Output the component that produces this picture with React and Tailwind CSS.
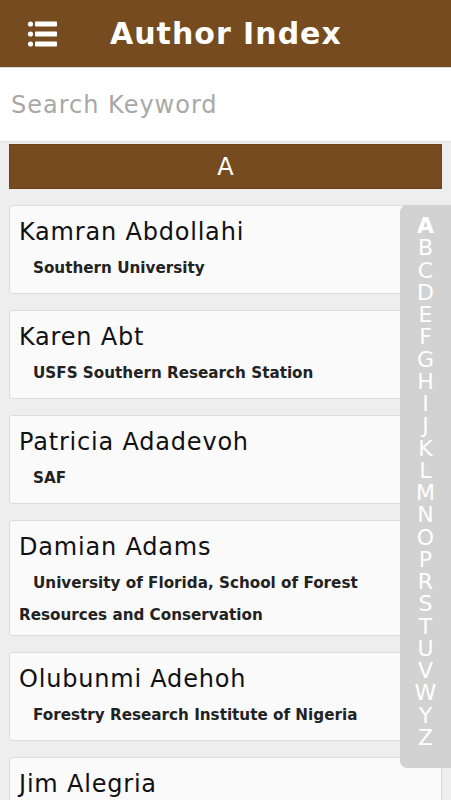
import React from 'react'

const FONT = { fontFamily: '"DejaVu Sans", Verdana, sans-serif' }

const authors = [
  { name: 'Kamran Abdollahi', org: 'Southern University' },
  { name: 'Karen Abt', org: 'USFS Southern Research Station' },
  { name: 'Patricia Adadevoh', org: 'SAF' },
  { name: 'Damian Adams', org: 'University of Florida, School of Forest Resources and Conservation' },
  { name: 'Olubunmi Adehoh', org: 'Forestry Research Institute of Nigeria' },
  { name: 'Jim Alegria', org: 'Weyerhaeuser Company' },
  { name: 'Sarah Allen', org: 'Clemson University' },
]

const letters = ['A', 'B', 'C', 'D', 'E', 'F', 'G', 'H', 'I', 'J', 'K', 'L', 'M', 'N', 'O', 'P', 'R', 'S', 'T', 'U', 'V', 'W', 'Y', 'Z']

function MenuIcon() {
  return (
    <svg width="32" height="30" viewBox="0 0 32 30" className="block">
      <circle cx="4.5" cy="5" r="2.6" fill="white" />
      <circle cx="4.5" cy="15" r="2.6" fill="white" />
      <circle cx="4.5" cy="25" r="2.6" fill="white" />
      <rect x="9" y="2.5" width="22" height="5" rx="0.8" fill="white" />
      <rect x="9" y="12.5" width="22" height="5" rx="0.8" fill="white" />
      <rect x="9" y="22.5" width="22" height="5" rx="0.8" fill="white" />
    </svg>
  )
}

function AuthorCard({ name, org }) {
  return (
    <div className="min-h-[89px] rounded-[3px] border border-[#dcdcdc] bg-[#fafafa] pl-[9px] pr-[12px] pt-[11px] pb-[4px]">
      <div className="text-[24px] leading-[30px] tracking-[0.8px] text-[#111]">{name}</div>
      <div className="mt-[5px] indent-[14px] text-[15.2px] font-bold leading-[32px] text-[#222]">{org}</div>
    </div>
  )
}

export default function App() {
  return (
    <div className="relative h-[800px] overflow-hidden bg-[#eeeeee]" style={FONT}>
      {/* Header */}
      <div className="flex h-[67px] items-center bg-[#754b1f]">
        <div className="ml-[26px] mt-[1px]">
          <MenuIcon />
        </div>
        <h1 className="ml-[52px] text-[30px] font-bold leading-none tracking-[1px] text-white">Author Index</h1>
      </div>

      {/* Search */}
      <div className="h-[74px] border-t border-[#d8d8d8] bg-white shadow-[0_1px_1px_rgba(0,0,0,0.05)]">
        <input
          className="h-full w-full bg-transparent px-[11px] text-[24px] tracking-[1px] text-[#333] outline-none placeholder:text-[#a8a8a8]"
          placeholder="Search Keyword"
          style={FONT}
        />
      </div>

      {/* List */}
      <div className="px-[9px] pt-[3px]">
        <div className="flex h-[45px] items-center justify-center border border-[#6a4419] bg-[#754b1f] text-[24px] text-white">
          A
        </div>
        <div className="mt-[16px] flex flex-col gap-[16px]">
          {authors.map((a, i) => (
            <AuthorCard key={i} name={a.name} org={a.org} />
          ))}
        </div>
      </div>

      {/* Alphabet index */}
      <div className="absolute left-[400px] right-0 top-[205px] flex h-[563px] flex-col items-center rounded-l-[7px] bg-[#d2d2d2] pt-[10px]">
        {letters.map((l, i) => (
          <div
            key={l}
            className={`text-[22px] leading-[22.25px] text-white ${i === 0 ? 'font-bold' : ''}`}
          >
            {l}
          </div>
        ))}
      </div>
    </div>
  )
}
